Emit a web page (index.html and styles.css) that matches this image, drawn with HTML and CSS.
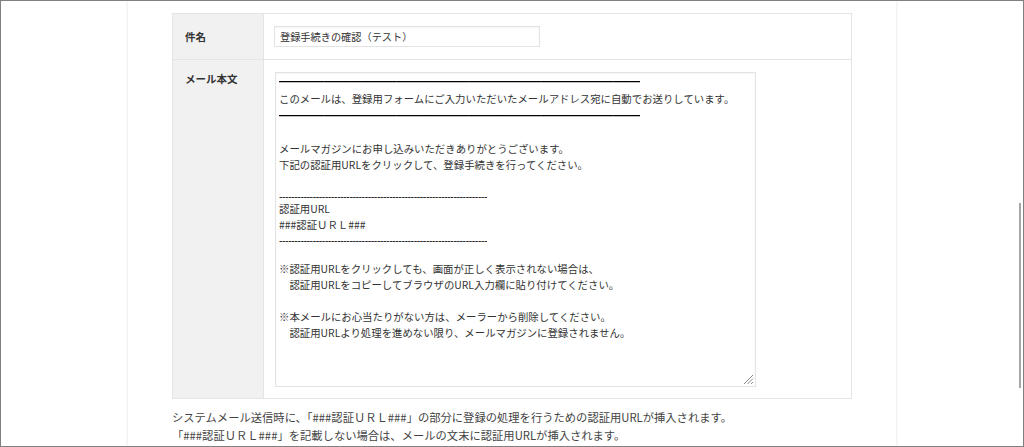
FILE: index.html
```html
<!DOCTYPE html>
<html lang="ja">
<head>
<meta charset="utf-8">
<title>登録手続きの確認</title>
<link rel="stylesheet" href="styles.css">
</head>
<body>
<div class="frame">
  <div class="panel">
    <table class="form">
      <tr class="row-subject">
        <th>件名</th>
        <td><input class="subject" type="text" value="登録手続きの確認（テスト）" readonly></td>
      </tr>
      <tr class="row-body">
        <th>メール本文</th>
        <td>
          <div class="ta">
            <div class="lr"><span class="rule">────────────────────────────────────────</span></div>
            <div class="l">このメールは、登録用フォームにご入力いただいたメールアドレス宛に自動でお送りしています。</div>
            <div class="lr"><span class="rule">────────────────────────────────────────</span></div>
            <div class="lb"></div>
            <div class="l">メールマガジンにお申し込みいただきありがとうございます。</div>
            <div class="l">下記の認証用URLをクリックして、登録手続きを行ってください。</div>
            <div class="lb"></div>
            <div class="ld"><span class="dash">--------------------------------------------------------------------</span></div>
            <div class="l">認証用URL</div>
            <div class="l">###認証ＵＲＬ###</div>
            <div class="ld"><span class="dash">--------------------------------------------------------------------</span></div>
            <div class="lb"></div>
            <div class="l">※認証用URLをクリックしても、画面が正しく表示されない場合は、</div>
            <div class="l">　認証用URLをコピーしてブラウザのURL入力欄に貼り付けてください。</div>
            <div class="lb"></div>
            <div class="l">※本メールにお心当たりがない方は、メーラーから削除してください。</div>
            <div class="l">　認証用URLより処理を進めない限り、メールマガジンに登録されません。</div>
            <svg class="grip" width="12" height="12" viewBox="0 0 12 12" aria-hidden="true">
              <path d="M11 2 L2 11 M11 5.5 L5.5 11 M11 9 L9 11" stroke="#8a8a8a" stroke-width="1" fill="none"/>
            </svg>
          </div>
        </td>
      </tr>
    </table>
    <p class="note">システムメール送信時に、「###認証ＵＲＬ###」の部分に登録の処理を行うための認証用URLが挿入されます。<br>「###認証ＵＲＬ###」を記載しない場合は、メールの文末に認証用URLが挿入されます。</p>
  </div>
  <div class="thumb"></div>
</div>
</body>
</html>
```

FILE: styles.css
```css
html, body {
  margin: 0;
  padding: 0;
  background: #fff;
}

body {
  font-family: "Noto Sans CJK JP", "Noto Sans", sans-serif;
  color: #333;
}

.frame {
  position: relative;
  height: 447px;
  box-sizing: border-box;
  border: 1px solid #808080;
  overflow: hidden;
  background: #fff;
}

.panel {
  width: 768px;
  height: 100%;
  margin: 0 auto;
  box-sizing: border-box;
  padding: 12px 44px 0;
  background: #fff;
  box-shadow: 0 0 3px rgba(0, 0, 0, 0.14);
}

.form {
  width: 680px;
  border-collapse: collapse;
}

.form th,
.form td {
  border: 1px solid #e4e4e4;
}

.form th {
  width: 66px;
  padding: 0 12px;
  background: #f1f1f1;
  text-align: left;
  font-weight: bold;
  font-size: 10.5px;
  line-height: 14px;
  color: #333;
}

.form td {
  padding: 12px 12px 12px 10px;
  background: #fff;
}

.row-subject th {
  vertical-align: middle;
}

.row-body th {
  vertical-align: top;
  padding-top: 12px;
}

.row-body td {
  padding-bottom: 11px;
}

.subject {
  display: block;
  width: 266px;
  height: 21px;
  box-sizing: border-box;
  margin: 0;
  padding: 0 5px;
  border: 1px solid #e3e3e3;
  box-shadow: inset 0 1px 2px rgba(0, 0, 0, 0.04);
  font-family: "Noto Sans CJK JP", sans-serif;
  font-size: 10.2px;
  color: #333;
  background: #fff;
  outline: none;
}

.ta {
  position: relative;
  width: 481px;
  height: 315px;
  margin-left: 1px;
  box-sizing: border-box;
  border: 1px solid #e3e3e3;
  box-shadow: inset 0 1px 2px rgba(0, 0, 0, 0.04);
  padding: 0 3px;
  font-size: 10.4px;
  color: #333;
  white-space: nowrap;
  overflow: hidden;
}

.l {
  height: 16px;
  line-height: 16px;
}

.lr {
  height: 18px;
  line-height: 18px;
}

.lb {
  height: 16px;
}

.ld {
  height: 12px;
  line-height: 15px;
}

.rule {
  display: inline-block;
  max-width: 366px;
  overflow: hidden;
  vertical-align: top;
  color: #000;
  font-family: "DejaVu Sans", sans-serif;
  font-size: 15px;
  line-height: 18px;
}

.dash {
  display: inline-block;
  max-width: 210px;
  overflow: hidden;
  vertical-align: top;
  letter-spacing: -0.4px;
  color: #111;
  font-family: "Liberation Sans", sans-serif;
  font-size: 10.4px;
}

.grip {
  position: absolute;
  right: 1px;
  bottom: 1px;
}

.note {
  margin: 9px 0 0;
  font-size: 11.3px;
  line-height: 18px;
  color: #444;
}

.thumb {
  position: absolute;
  right: 2px;
  top: 202px;
  width: 2px;
  height: 185px;
  background: #a6a6a6;
}
```
